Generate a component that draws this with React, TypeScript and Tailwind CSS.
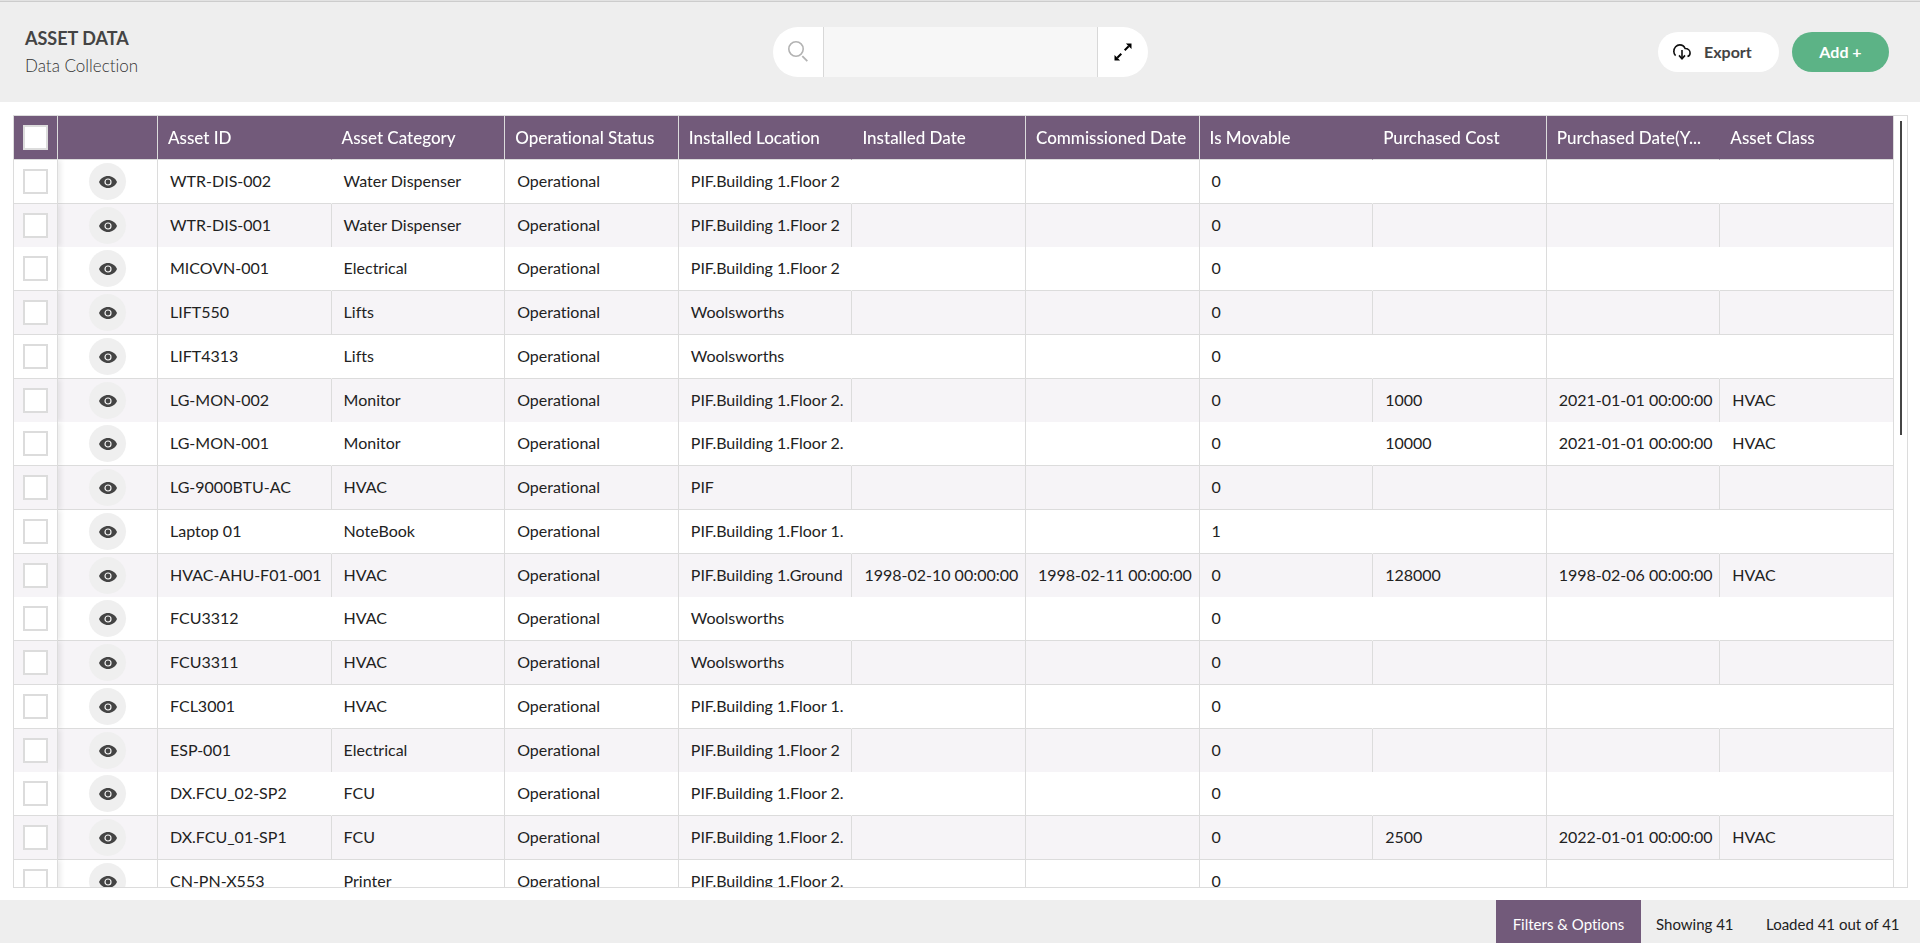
type Asset = {
  id: string;
  category: string;
  location: string;
  installed?: string;
  commissioned?: string;
  movable: string;
  cost?: string;
  purchased?: string;
  assetClass?: string;
};

const COLUMNS = [
  'Asset ID',
  'Asset Category',
  'Operational Status',
  'Installed Location',
  'Installed Date',
  'Commissioned Date',
  'Is Movable',
  'Purchased Cost',
  'Purchased Date(Y...',
  'Asset Class',
];

// Columns whose right-hand rule is only drawn on the shaded rows.
const SOFT_RULES = [0, 3, 6, 8];

const ASSETS: Asset[] = [
  { id: 'WTR-DIS-002', category: 'Water Dispenser', location: 'PIF.Building 1.Floor 2', movable: '0' },
  { id: 'WTR-DIS-001', category: 'Water Dispenser', location: 'PIF.Building 1.Floor 2', movable: '0' },
  { id: 'MICOVN-001', category: 'Electrical', location: 'PIF.Building 1.Floor 2', movable: '0' },
  { id: 'LIFT550', category: 'Lifts', location: 'Woolsworths', movable: '0' },
  { id: 'LIFT4313', category: 'Lifts', location: 'Woolsworths', movable: '0' },
  { id: 'LG-MON-002', category: 'Monitor', location: 'PIF.Building 1.Floor 2.', movable: '0', cost: '1000', purchased: '2021-01-01 00:00:00', assetClass: 'HVAC' },
  { id: 'LG-MON-001', category: 'Monitor', location: 'PIF.Building 1.Floor 2.', movable: '0', cost: '10000', purchased: '2021-01-01 00:00:00', assetClass: 'HVAC' },
  { id: 'LG-9000BTU-AC', category: 'HVAC', location: 'PIF', movable: '0' },
  { id: 'Laptop 01', category: 'NoteBook', location: 'PIF.Building 1.Floor 1.', movable: '1' },
  { id: 'HVAC-AHU-F01-001', category: 'HVAC', location: 'PIF.Building 1.Ground', installed: '1998-02-10 00:00:00', commissioned: '1998-02-11 00:00:00', movable: '0', cost: '128000', purchased: '1998-02-06 00:00:00', assetClass: 'HVAC' },
  { id: 'FCU3312', category: 'HVAC', location: 'Woolsworths', movable: '0' },
  { id: 'FCU3311', category: 'HVAC', location: 'Woolsworths', movable: '0' },
  { id: 'FCL3001', category: 'HVAC', location: 'PIF.Building 1.Floor 1.', movable: '0' },
  { id: 'ESP-001', category: 'Electrical', location: 'PIF.Building 1.Floor 2', movable: '0' },
  { id: 'DX.FCU_02-SP2', category: 'FCU', location: 'PIF.Building 1.Floor 2.', movable: '0' },
  { id: 'DX.FCU_01-SP1', category: 'FCU', location: 'PIF.Building 1.Floor 2.', movable: '0', cost: '2500', purchased: '2022-01-01 00:00:00', assetClass: 'HVAC' },
  { id: 'CN-PN-X553', category: 'Printer', location: 'PIF.Building 1.Floor 2.', movable: '0' },
];

const CHECKBOX =
  'block h-[25px] w-[25px] shrink-0 appearance-none border-2 border-[#dcdcdc] bg-white checked:bg-[#725a7a]';

function SearchIcon() {
  return (
    <svg viewBox="0 0 20 21" className="h-[21px] w-5" fill="none" stroke="#b3b3b3" aria-hidden="true">
      <circle cx="8" cy="8" r="7.2" strokeWidth="1.6" />
      <path d="M14.3 15.2l5 5" strokeWidth="1.8" />
    </svg>
  );
}

function ExpandIcon() {
  return (
    <svg viewBox="0 0 18 18" className="h-[18px] w-[18px]" fill="#000" stroke="#000" aria-hidden="true">
      <path d="M10.700 7.300l4-4M3.300 14.700l4-4" strokeWidth="2" />
      <path d="M17.500.5v5.600L11.900.5zM.5 17.500v-5.600l5.600 5.600z" stroke="none" />
    </svg>
  );
}

function CloudIcon() {
  return (
    <svg viewBox="0 0 18 16" className="h-4 w-[18px]" fill="none" stroke="#111" strokeWidth="1.6" aria-hidden="true">
      <path d="M2.6 11.6A5.2 5.2 0 0 1 .9 7.2C.9 3.7 3.5.9 6.8.9c2.4 0 4.400 1.500 5.300 3.600 2.900 0 5 1.900 5 4.400 0 1.700-1 3.100-2.600 3.700" />
      <path d="M9 6v8" />
      <path d="M6 11.4l3 3.300 3-3.300" />
    </svg>
  );
}

function EyeIcon() {
  return (
    <svg viewBox="0 0 18 12" className="h-3 w-[18px]" aria-hidden="true">
      <path d="M9 0C5 0 1.500 2.500 0 6c1.500 3.500 5 6 9 6s7.500-2.500 9-6c-1.500-3.500-5-6-9-6z" fill="#444" />
      <circle cx="9" cy="6" r="3" fill="none" stroke="#f2f2f2" strokeWidth="1.2" />
    </svg>
  );
}

function ruleClass(column: number, shaded: boolean) {
  return SOFT_RULES.includes(column) && !shaded ? 'border-r border-r-transparent' : 'border-r border-r-[#dcdcdc]';
}

function AssetRow({ asset, index }: { asset: Asset; index: number }) {
  const shaded = index % 2 === 1;
  // Every fourth row runs straight into the next one without a rule.
  const joined = index % 4 === 1;
  const line = joined ? '' : 'border-b border-b-[#dcdcdc]';
  const values = [
    asset.id,
    asset.category,
    'Operational',
    asset.location,
    asset.installed,
    asset.commissioned,
    asset.movable,
    asset.cost,
    asset.purchased,
    asset.assetClass,
  ];

  return (
    <tr className={`${joined ? 'h-[43px]' : 'h-11'} ${shaded ? 'bg-[#f6f4f7]' : 'bg-white'}`}>
      <td
        className={`relative border-r border-r-[#dcdcdc] p-0 pl-[9px] shadow-[3px_0_5px_rgba(0,0,0,0.08)] [clip-path:inset(0_-8px_0_0)] ${line}`}
      >
        <input type="checkbox" aria-label={`Select ${asset.id}`} className={CHECKBOX} />
      </td>
      <td className={`border-r border-r-[#dcdcdc] p-0 ${line}`}>
        <button
          type="button"
          aria-label={`View ${asset.id}`}
          className="mx-auto flex h-[37px] w-[37px] items-center justify-center rounded-full bg-[#efefef]"
        >
          <EyeIcon />
        </button>
      </td>
      {values.map((value, column) => (
        <td
          key={COLUMNS[column]}
          className={`overflow-hidden p-0 pb-0.5 pl-3 whitespace-nowrap ${line} ${ruleClass(column, shaded)}`}
        >
          {value}
        </td>
      ))}
    </tr>
  );
}

export default function App() {
  return (
    <div className="flex h-screen flex-col bg-white font-['Lato',sans-serif] text-base text-[#222] [font-variant-ligatures:no-common-ligatures]">
      <header className="grid h-[102px] shrink-0 grid-cols-[1fr_375px_1fr] items-center border-t border-[#e2e2e2] bg-[#eee] px-[25px] shadow-[inset_0_1px_0_#ccc]">
        <div>
          <h1 className="text-lg leading-6 font-bold text-[#444]">ASSET DATA</h1>
          <p className="mt-1 text-[17px] leading-6 font-light text-[#333]">Data Collection</p>
        </div>
        <form role="search" className="flex h-[50px] overflow-hidden rounded-full bg-white">
          <button type="submit" aria-label="Search" className="flex w-[50px] shrink-0 items-center justify-center">
            <SearchIcon />
          </button>
          <input
            type="text"
            aria-label="Search assets"
            className="min-w-0 flex-1 border-x border-[#d8d8d8] bg-[#f7f7f7] px-3 outline-none"
          />
          <button type="button" aria-label="Expand search" className="flex w-[50px] shrink-0 items-center justify-center">
            <ExpandIcon />
          </button>
        </form>
        <div className="flex justify-end gap-[13px] pr-1.5">
          <button
            type="button"
            className="flex h-10 w-[121px] items-center gap-[13px] rounded-full bg-white pl-[15px] font-bold text-[#444]"
          >
            <CloudIcon />
            Export
          </button>
          <button type="button" className="h-10 w-[97px] rounded-full bg-[#5cb386] font-bold text-white">
            Add +
          </button>
        </div>
      </header>

      <main className="mt-[13px] mr-3 mb-3 ml-[13px] flex min-h-0 flex-1 border border-[#dcdcdc]">
        <div className="min-w-0 flex-1 overflow-auto [scrollbar-width:none]">
          <table className="w-full table-fixed border-separate border-spacing-0">
            <colgroup>
              <col className="w-11" />
              <col className="w-[100px]" />
              {COLUMNS.map((name) => (
                <col key={name} />
              ))}
            </colgroup>
            <thead className="sticky top-0 z-10">
              <tr className="h-11 bg-[#725a7a] text-left text-[17px] text-white">
                <th className="border-r border-b border-[#dcdcdc] p-0 pl-[9px]">
                  <input type="checkbox" aria-label="Select all assets" className={CHECKBOX} />
                </th>
                <th aria-label="View" className="border-r border-b border-[#dcdcdc] p-0" />
                {COLUMNS.map((name, column) => (
                  <th
                    key={name}
                    scope="col"
                    className={`border-b border-b-[#dcdcdc] p-0 pl-[10px] font-medium whitespace-nowrap ${ruleClass(column, false)}`}
                  >
                    {name}
                  </th>
                ))}
              </tr>
            </thead>
            <tbody>
              {ASSETS.map((asset, index) => (
                <AssetRow key={asset.id} asset={asset} index={index} />
              ))}
            </tbody>
          </table>
        </div>
        <div className="w-[13px] shrink-0 pt-[5px] pl-[6px]">
          <div className="h-[314px] w-0.5 bg-[#444]" />
        </div>
      </main>

      <footer className="flex h-[43px] shrink-0 items-stretch justify-end bg-[#eee] text-[15px]">
        <button type="button" className="w-[145px] bg-[#725a7a] pt-1.5 text-white">
          Filters &amp; Options
        </button>
        <p className="flex w-[125px] items-center pt-1.5 pl-[15px]">Showing 41</p>
        <p className="flex w-[154px] items-center pt-1.5">Loaded 41 out of 41</p>
      </footer>
    </div>
  );
}
